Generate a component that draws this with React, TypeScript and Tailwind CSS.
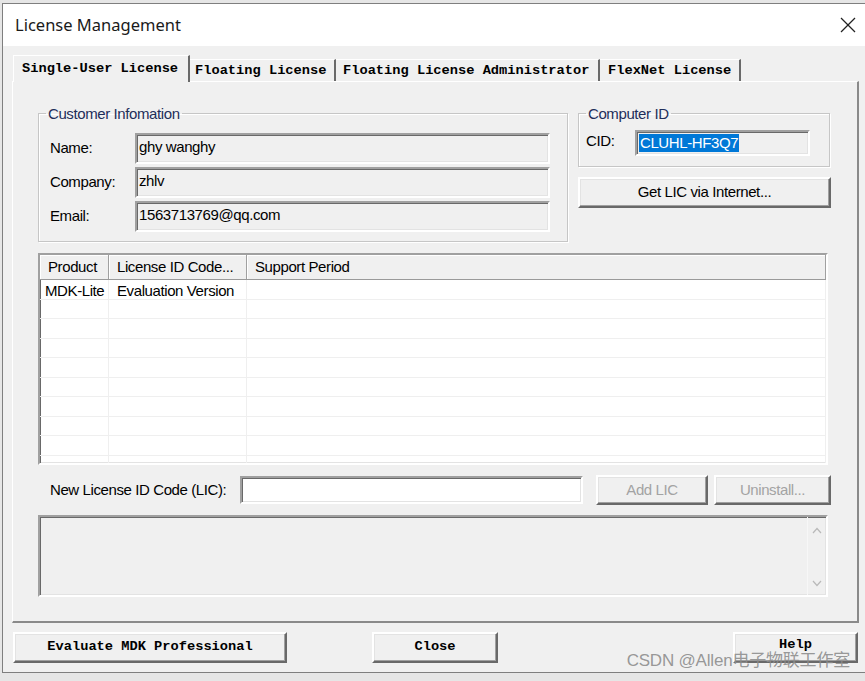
const sunken =
  "border-2 border-t-[#a0a0a0] border-l-[#a0a0a0] border-r-white border-b-white shadow-[inset_1px_1px_0_#696969,inset_-1px_-1px_0_#e3e3e3]";
const raised =
  "border-2 border-t-white border-l-white border-r-[#696969] border-b-[#696969] shadow-[inset_-1px_-1px_0_#a0a0a0,inset_1px_1px_0_#e3e3e3] bg-[#f0f0f0]";
const ui = "font-['Liberation_Sans',Arial,sans-serif] text-[15px] tracking-[-0.4px] text-black";
const mono = "font-['Liberation_Mono',monospace] font-bold text-[13.7px] text-black";

function Field({ label, value }: { label: string; value: string }) {
  return (
    <div className="flex items-center h-[31px]">
      <span className="w-[96px] pl-[11px]">{label}</span>
      <div className={`${sunken} bg-[#f0f0f0] w-[415px] h-full flex items-center pl-[2px] pb-[3px]`}>
        {value}
      </div>
    </div>
  );
}

function Chevron({ up }: { up?: boolean }) {
  return (
    <svg width="10" height="7" viewBox="0 0 10 7" fill="none" stroke="#b9b9b9" strokeWidth="1.2">
      <polyline points={up ? "1,6 5,1.5 9,6" : "1,1 5,5.5 9,1"} />
    </svg>
  );
}

export default function App() {
  const rows = Array.from({ length: 10 });
  return (
    <div className={`w-[865px] h-[681px] bg-[#e6e6e6] pl-[2px] pt-[3px] overflow-hidden ${ui}`}>
      <div className="w-[863px] border-l border-t border-b border-[#7f7f7f] bg-[#f0f0f0] relative">
        {/* title bar */}
        <div className="h-[42px] bg-white flex items-center justify-between pl-[12px] pr-[8px]">
          <span className="font-['Noto_Sans',sans-serif] text-[16.5px] tracking-normal text-[#1a1a1a]">
            License Management
          </span>
          <svg width="18" height="18" viewBox="0 0 18 18" stroke="#222" strokeWidth="1.3">
            <line x1="2" y1="2" x2="16" y2="16" />
            <line x1="16" y1="2" x2="2" y2="16" />
          </svg>
        </div>

        <div className="pt-[9px] pb-[9px]">
          {/* tabs */}
          <div className={`flex items-end h-[26px] ml-[10px] ${mono} tracking-normal`}>
            <div className="relative z-10 -mb-px h-[27px] w-[177px] bg-[#f0f0f0] border-t border-l border-white border-r-2 border-r-[#696969] pl-[8px] pt-[3px]">
              Single-User License
            </div>
            <div className="h-[22px] w-[146px] border-t border-white border-r-2 border-r-[#696969] pl-[5px] pt-[1px]">
              Floating License
            </div>
            <div className="h-[22px] w-[264px] border-t border-white border-r-2 border-r-[#696969] pl-[7px] pt-[1px]">
              Floating License Administrator
            </div>
            <div className="h-[22px] w-[141px] border-t border-white border-r-2 border-r-[#696969] pl-[8px] pt-[1px]">
              FlexNet License
            </div>
          </div>

          {/* panel */}
          <div className="ml-[9px] w-[847px] border-t border-l border-white border-r-2 border-b-2 border-r-[#8a8a8a] border-b-[#8a8a8a] pt-[23px] pb-[24px] pl-[25px]">
            <div className="flex gap-[10px]">
              <fieldset className="w-[530px] border border-[#c6c6c6] shadow-[inset_1px_1px_0_#fff,1px_1px_0_#fff] pb-[9px]">
                <legend className="ml-[7px] px-[2px] leading-[17px] text-[#1e2e5a]">Customer Infomation</legend>
                <div className="mt-[11px] flex flex-col gap-[3px]">
                  <Field label="Name:" value="ghy wanghy" />
                  <Field label="Company:" value="zhlv" />
                  <Field label="Email:" value="1563713769@qq.com" />
                </div>
              </fieldset>

              <div className="w-[253px] flex flex-col">
                <fieldset className="w-[252px] border border-[#c6c6c6] shadow-[inset_1px_1px_0_#fff,1px_1px_0_#fff] pb-[10px]">
                  <legend className="ml-[7px] px-[2px] leading-[17px] text-[#1e2e5a]">Computer ID</legend>
                  <div className="flex items-center mt-[8px] h-[26px]">
                    <span className="w-[56px] pl-[7px] pb-[4px]">CID:</span>
                    <div className={`${sunken} bg-[#f0f0f0] w-[175px] h-full flex items-center pl-[2px]`}>
                      <span className="bg-[#0078d7] text-white leading-[18px] px-[1px]">CLUHL-HF3Q7</span>
                    </div>
                  </div>
                </fieldset>
                <button className={`${raised} mt-[10px] h-[31px] w-[253px] flex items-center justify-center`}>
                  Get LIC via Internet...
                </button>
              </div>
            </div>

            {/* list view */}
            <div className={`${sunken} mt-[11px] w-[790px] h-[212px] bg-white overflow-hidden`}>
              <div className="grid grid-cols-[69px_138px_1fr] h-[25px] bg-[#f0f0f0] border-b border-[#9a9a9a]">
                <div className="pl-[8px] flex items-center border-r border-[#a0a0a0] shadow-[inset_1px_1px_0_#fff]">Product</div>
                <div className="pl-[8px] flex items-center border-r border-[#a0a0a0] shadow-[inset_1px_1px_0_#fff]">License ID Code...</div>
                <div className="pl-[8px] flex items-center border-r border-[#a0a0a0] shadow-[inset_1px_1px_0_#fff]">Support Period</div>
              </div>
              {rows.map((_, i) => (
                <div key={i} className="grid grid-cols-[69px_138px_1fr] h-[19.5px] border-b border-[#efefef]">
                  <div className="pl-[5px] flex items-center border-r border-[#efefef]">{i === 0 ? "MDK-Lite" : ""}</div>
                  <div className="pl-[8px] flex items-center border-r border-[#efefef]">{i === 0 ? "Evaluation Version" : ""}</div>
                  <div className="border-r border-[#efefef]" />
                </div>
              ))}
            </div>

            {/* new LIC row */}
            <div className="mt-[10px] h-[30px] flex items-center">
              <span className="w-[202px] pl-[12px]">New License ID Code (LIC):</span>
              <div className={`${sunken} bg-white w-[343px] h-[28px]`} />
              <button className={`${raised} ml-[13px] w-[112px] h-[30px] text-[#a3a3a3]`}>Add LIC</button>
              <button className={`${raised} ml-[6px] w-[117px] h-[30px] text-[#a3a3a3]`}>Uninstall...</button>
            </div>

            {/* message box */}
            <div className={`${sunken} mt-[10px] w-[790px] h-[82px] bg-[#f0f0f0] flex justify-end`}>
              <div className="w-[19px] border-l border-[#f7f7f7] flex flex-col items-center justify-between pt-[10px] pb-[8px]">
                <Chevron up />
                <Chevron />
              </div>
            </div>
          </div>

          {/* bottom buttons */}
          <div className={`mt-[9px] h-[31px] flex pl-[10px] ${mono} tracking-normal`}>
            <button className={`${raised} w-[274px]`}>Evaluate MDK Professional</button>
            <button className={`${raised} ml-[85px] w-[126px]`}>Close</button>
            <button className={`${raised} ml-[235px] w-[125px] pb-[4px]`}>Help</button>
          </div>
        </div>

        <span className="absolute right-[15px] bottom-[-1px] font-['Liberation_Sans','Noto_Sans_CJK_SC',sans-serif] text-[17px] tracking-[-0.2px] text-[#8c8c8c]/90 pointer-events-none">
          CSDN @Allen电子物联工作室
        </span>
      </div>
    </div>
  );
}
